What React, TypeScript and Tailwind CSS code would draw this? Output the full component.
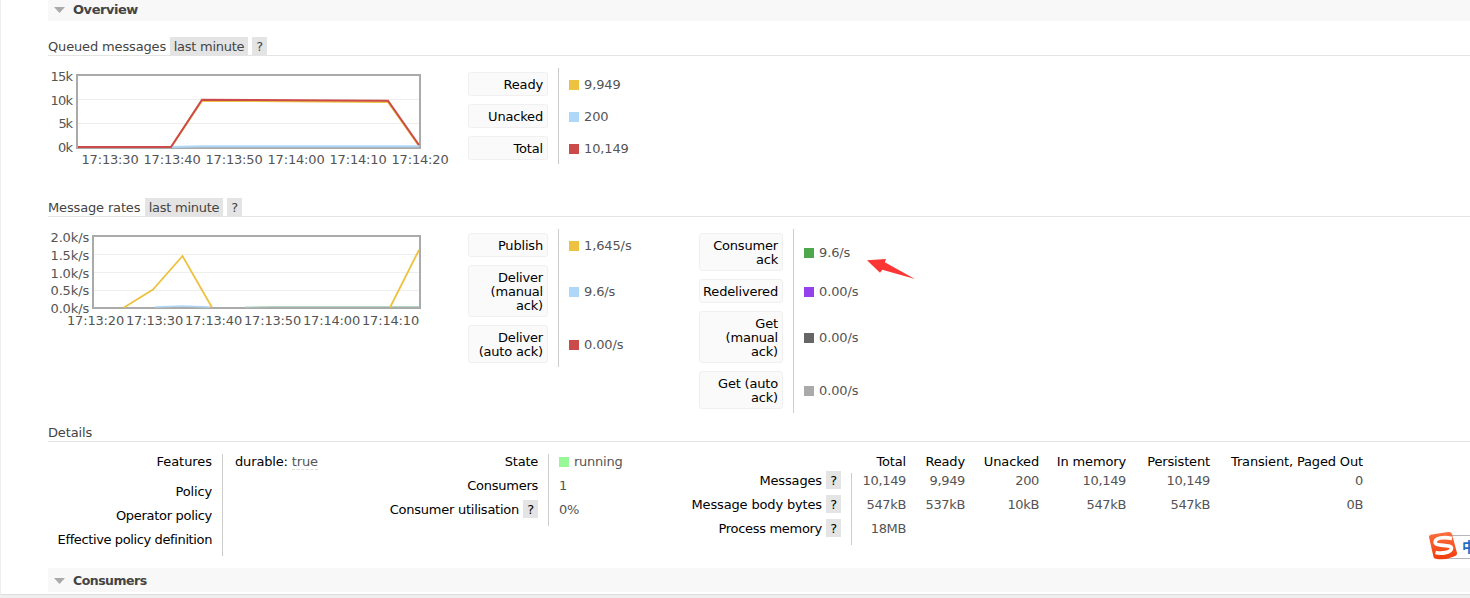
import React from 'react';

type Item = { label: string[]; color: string; value: string; h: string };

const queued: Item[] = [
  { label: ['Ready'], color: 'bg-[#edc240]', value: '9,949', h: 'h-6' },
  { label: ['Unacked'], color: 'bg-[#afd8f8]', value: '200', h: 'h-6' },
  { label: ['Total'], color: 'bg-[#cb4b4b]', value: '10,149', h: 'h-6' },
];
const ratesA: Item[] = [
  { label: ['Publish'], color: 'bg-[#edc240]', value: '1,645/s', h: 'h-6' },
  { label: ['Deliver', '(manual', 'ack)'], color: 'bg-[#afd8f8]', value: '9.6/s', h: 'h-[52px]' },
  { label: ['Deliver', '(auto ack)'], color: 'bg-[#cb4b4b]', value: '0.00/s', h: 'h-[38px]' },
];
const ratesB: Item[] = [
  { label: ['Consumer', 'ack'], color: 'bg-[#4da74d]', value: '9.6/s', h: 'h-[38px]' },
  { label: ['Redelivered'], color: 'bg-[#9440ed]', value: '0.00/s', h: 'h-6' },
  { label: ['Get', '(manual', 'ack)'], color: 'bg-[#666666]', value: '0.00/s', h: 'h-[52px]' },
  { label: ['Get (auto', 'ack)'], color: 'bg-[#aaaaaa]', value: '0.00/s', h: 'h-[38px]' },
];

function Legend({ items, width }: { items: Item[]; width: string }) {
  return (
    <div className="flex">
      <div className={`flex shrink-0 flex-col gap-2 border-r border-[#ccc] py-1 pr-[10px] ${width}`}>
        {items.map((it) => (
          <div
            key={it.label.join()}
            className={`flex flex-col justify-center rounded-[3px] border border-[#f0f0f0] bg-[#fafafa] pr-1 pt-0.5 text-right leading-[14px] tracking-[-0.18px] text-black ${it.h}`}
          >
            {it.label.map((l) => (
              <span key={l}>{l}</span>
            ))}
          </div>
        ))}
      </div>
      <div className="flex flex-col gap-2 py-1 pl-[10px]">
        {items.map((it) => (
          <div key={it.label.join()} className={`flex items-center gap-[5px] ${it.h}`}>
            <span className={`mt-px size-[10px] ${it.color}`} />
            <span className="pt-0.5 tracking-[-0.12px] text-[#545454]">{it.value}</span>
          </div>
        ))}
      </div>
    </div>
  );
}

function Help({ box = '' }: { box?: string }) {
  return (
    <span className={`flex h-[18px] w-[15px] shrink-0 items-center justify-center bg-[#e4e4e4] pt-0.5 ${box}`}>?</span>
  );
}

function SubHeading({ title, width }: { title: string; width: string }) {
  return (
    <div className="flex h-[19px] items-center border-b border-[#e4e4e4] text-[#444]">
      <span className={`shrink-0 pt-0.5 ${width}`}>{title}</span>
      <span className="mr-1 flex h-[18px] w-[78px] items-center justify-center bg-[#e4e4e4] pt-0.5 tracking-[-0.25px]">last minute</span>
      <Help />
    </div>
  );
}

function SectionBar({ title, height, tracking }: { title: string; height: string; tracking: string }) {
  return (
    <div className={`flex items-end bg-[#f8f8f8] pl-[6px] ${height}`}>
      <div className="flex h-6 items-center gap-2">
        <svg className="mt-0.5" width="11" height="6" viewBox="0 0 11 6">
          <path d="M0 0H11L5.5 6Z" fill="#aaa" />
        </svg>
        <span className={`pt-0.5 font-bold text-[#444] ${tracking}`}>{title}</span>
      </div>
    </div>
  );
}

function Ticks({ x, ys, labels, len }: { x: number; ys: number[]; labels: string[]; len: number[] }) {
  return (
    <g textAnchor="end">
      {labels.map((l, i) => (
        <text key={l} x={x} y={ys[i]} textLength={len[i]}>{l}</text>
      ))}
    </g>
  );
}

function QueuedChart() {
  const times = ['17:13:30', '17:13:40', '17:13:50', '17:14:00', '17:14:10', '17:14:20'];
  return (
    <svg width="420" height="104" viewBox="48 68 420 104" fontSize="13" fill="#545454" className="block">
      <path d="M78 99.5H419M78 123.5H419" stroke="#eee" />
      <rect x="77" y="75" width="343" height="73" fill="none" stroke="#aaa" strokeWidth="2" />
      <g fill="none" strokeWidth="2">
        <path d="M78 147H171L202 100.8L388 101.9L419 146" stroke="#edc240" />
        <path d="M171 147L202 146.2H419" stroke="#afd8f8" />
        <path d="M78 147H171L202 99.8L388 100.8L419 145" stroke="#cb4b4b" />
      </g>
      <Ticks x={73} ys={[81, 105, 128, 152]} labels={['15k', '10k', '5k', '0k']} len={[22.5, 22.5, 14.5, 15]} />
      {times.map((t, i) => (
        <text key={t} x={81.5 + i * 62} y="164" textLength="57">{t}</text>
      ))}
    </svg>
  );
}

function RatesChart() {
  const times = ['17:13:20', '17:13:30', '17:13:40', '17:13:50', '17:14:00', '17:14:10'];
  return (
    <svg width="420" height="104" viewBox="48 229 420 104" fontSize="13" fill="#545454" className="block">
      <path d="M94 254.5H419M94 272.5H419M94 290.5H419" stroke="#eee" />
      <rect x="93" y="236" width="327" height="72" fill="none" stroke="#aaa" strokeWidth="2" />
      <path d="M155 307L182 306L210 307" stroke="#afd8f8" strokeWidth="1.5" fill="none" />
      <path d="M245 307L270 306.5H419" stroke="#b6d9c4" fill="none" />
      <path d="M124 307.5L153 289.5L182.5 256L212 307.5M390 307.5L419 250" stroke="#edc240" strokeWidth="1.8" fill="none" />
      <Ticks
        x={89}
        ys={[242, 260, 278, 295, 313]}
        labels={['2.0k/s', '1.5k/s', '1.0k/s', '0.5k/s', '0.0k/s']}
        len={[38.5, 38.5, 38.5, 38.5, 38.5]}
      />
      {times.map((t, i) => (
        <text key={t} x={67 + i * 59} y="325" textLength="57">{t}</text>
      ))}
    </svg>
  );
}

const row = 'flex h-6 items-center justify-end gap-1 whitespace-nowrap';

const columns = [
  { w: 'w-[54px]', cells: ['Total', '10,149', '547kB', '18MB'] },
  { w: 'w-[59px]', cells: ['Ready', '9,949', '537kB'] },
  { w: 'w-[74px]', cells: ['Unacked', '200', '10kB'] },
  { w: 'w-[87px]', cells: ['In memory', '10,149', '547kB'] },
  { w: 'w-[84px]', cells: ['Persistent', '10,149', '547kB'] },
  { w: 'w-[153px]', cells: ['Transient, Paged Out', '0', '0B'] },
];

function Details() {
  return (
    <div className="flex h-[126px] items-start pt-3 text-black">
      <div className="flex h-[102px] w-[175px] shrink-0 flex-col items-end border-r border-[#ccc] pr-[10px]">
        <div className="h-[26px] leading-4 tracking-[-0.05px]">Features</div>
        <div className="flex flex-col">
          <div className={row}>Policy</div>
          <div className={`${row} tracking-[-0.3px]`}>Operator policy</div>
          <div className={`${row} tracking-[-0.38px]`}>Effective policy definition</div>
        </div>
      </div>
      <div className="flex h-4 w-[151px] shrink-0 items-center gap-1 pl-3">
        <span>durable:</span>
        <span className="border-b border-dashed border-[#ddd] leading-[14px] text-[#545454]">true</span>
      </div>
      <div className="h-[72px] w-[175px] shrink-0 border-r border-[#ccc] pr-[10px]">
        <div className="mt-[-4px] tracking-[-0.25px]">
          <div className={row}>State</div>
          <div className={row}>Consumers</div>
          <div className={row}>Consumer utilisation <Help box="-mt-0.5" /></div>
        </div>
      </div>
      <div className="mt-[-4px] w-[128px] shrink-0 pl-[10px] tracking-[-0.25px] text-[#545454]">
        <div className="flex h-6 items-center gap-[5px]">
          <span className="size-[10px] bg-[#98f898]" />running
        </div>
        <div className="flex h-6 items-center">1</div>
        <div className="flex h-6 items-center">0%</div>
      </div>
      <div className="mt-[19px] h-[72px] w-[175px] shrink-0 border-r border-[#ccc] pr-[10px]">
        <div className="mt-[-4px]">
          <div className={row}>Messages <Help box="-mt-0.5" /></div>
          <div className={row}>Message body bytes <Help box="-mt-0.5" /></div>
          <div className={`${row} tracking-[-0.3px]`}>Process memory <Help box="-mt-0.5" /></div>
        </div>
      </div>
      {columns.map((c) => (
        <div key={c.cells[0]} className={`shrink-0 ${c.w}`}>
          <div className="flex h-[15px] items-center justify-end whitespace-nowrap">{c.cells[0]}</div>
          {c.cells.slice(1).map((v, i) => (
            <div key={i} className="flex h-6 items-center justify-end tracking-[-0.35px] text-[#545454]">{v}</div>
          ))}
        </div>
      ))}
    </div>
  );
}

export default function App() {
  return (
    <div className="relative h-[598px] w-[1470px] overflow-hidden bg-[#efefef] font-['DejaVu_Sans',sans-serif] text-[13px] leading-4 tracking-[-0.15px] text-[#484848]">
      <div className="h-[595px] border-b border-l border-b-[#ddd] border-l-[#eee] bg-white pl-[47px]">
        <SectionBar title="Overview" height="h-[21px]" tracking="text-[13px] tracking-[-0.45px]" />
        <div className="pt-4">
          <SubHeading title="Queued messages" width="w-[122px]" />
        </div>
        <div className="flex h-[142px] items-start pt-3">
          <QueuedChart />
          <Legend items={queued} width="w-[91px]" />
        </div>
        <SubHeading title="Message rates" width="w-[97px]" />
        <div className="flex h-[207px] items-start pt-3">
          <RatesChart />
          <div className="w-[231px] shrink-0">
            <Legend items={ratesA} width="w-[91px]" />
          </div>
          <Legend items={ratesB} width="w-[95px]" />
        </div>
        <div className="flex h-[18px] items-center border-b border-[#e4e4e4] text-[#444]">Details</div>
        <Details />
        <SectionBar title="Consumers" height="h-6" tracking="text-[12.5px] tracking-[-0.5px]" />
      </div>
      <svg className="absolute left-[867px] top-[257px]" width="50" height="24" viewBox="867 257 50 24">
        <path d="M867 260.2L886 259L884.8 262.3L915 279L882.3 269.8L880 272.8Z" fill="#fc3535" />
      </svg>
      <div className="absolute left-[1440px] top-[535px] h-6 w-[60px] overflow-hidden border border-[#b5b5bd] bg-white pl-[21px] font-['Noto_Sans_CJK_SC',sans-serif] text-[14px] font-bold leading-[21px] text-[#1c70c8]">中</div>
      <svg className="absolute left-[1428px] top-[531px]" width="30" height="30" viewBox="0 0 30 30">
        <defs>
          <linearGradient id="tile" x1="0" y1="0" x2="0" y2="1">
            <stop offset="0" stopColor="#fb7040" />
            <stop offset="1" stopColor="#f23d0c" />
          </linearGradient>
        </defs>
        <path d="M1 6Q1 4 4 3.5L20 1Q23 .5 24 3L29 22Q29.5 24 26 25.5Q18 29 9 28Q6 28 5.5 26Z" fill="url(#tile)" />
        <path d="M24 7.5C15 5.5 7 7 7.2 11.5C7.4 15.8 23.5 12.8 23.5 17.3C23.5 21.8 13 22.8 7.5 21.5" fill="none" stroke="white" strokeWidth="3.7" />
      </svg>
    </div>
  );
}
